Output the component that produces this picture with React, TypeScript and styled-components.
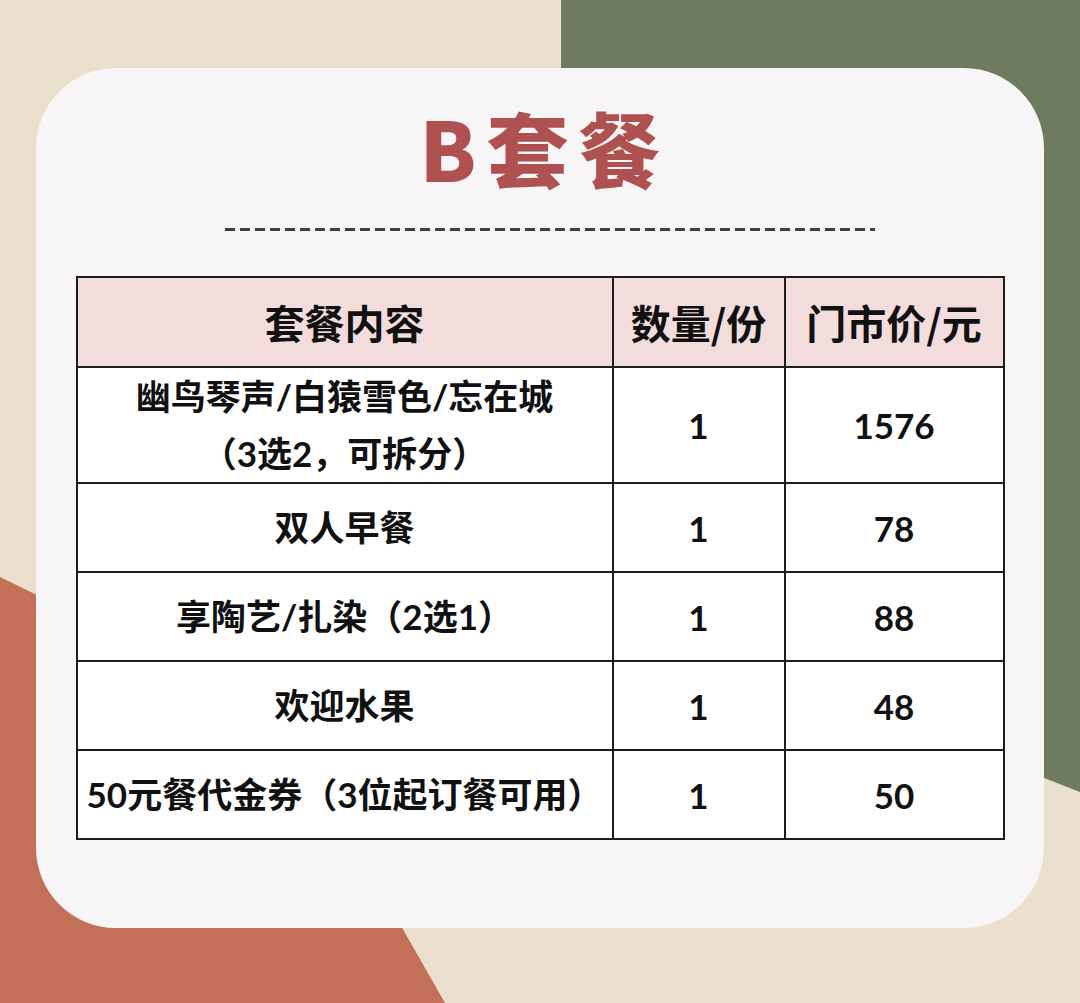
import * as React from 'react';
import styled, { createGlobalStyle } from 'styled-components';

const rows = [
  { name: ['幽鸟琴声/白猿雪色/忘在城', '（3选2，可拆分）'], qty: '1', price: '1576', tall: true },
  { name: ['双人早餐'], qty: '1', price: '78' },
  { name: ['享陶艺/扎染（2选1）'], qty: '1', price: '88' },
  { name: ['欢迎水果'], qty: '1', price: '48' },
  { name: ['50元餐代金券（3位起订餐可用）'], qty: '1', price: '50' },
];

export default function App() {
  return (
    <Page>
      <GlobalStyle />
      <GreenBlob />
      <ClayBlob />
      <Card>
        <Title>B套餐</Title>
        <Dashes />
        <Table>
          <colgroup>
            <col style={{ width: 536 }} />
            <col style={{ width: 172 }} />
            <col style={{ width: 219 }} />
          </colgroup>
          <thead>
            <tr>
              <HeadCell>套餐内容</HeadCell>
              <HeadCell>数量/份</HeadCell>
              <HeadCell>门市价/元</HeadCell>
            </tr>
          </thead>
          <tbody>
            {rows.map(row => (
              <BodyRow key={row.price} $tall={row.tall}>
                <Cell>
                  {row.name.map(line => (
                    <Line key={line}>{line}</Line>
                  ))}
                </Cell>
                <Cell>{row.qty}</Cell>
                <Cell>{row.price}</Cell>
              </BodyRow>
            ))}
          </tbody>
        </Table>
      </Card>
    </Page>
  );
}

const GlobalStyle = createGlobalStyle`
  html, body {
    margin: 0;
    padding: 0;
  }
  body {
    font-family: Lato, "Noto Sans CJK SC", sans-serif;
  }
`;

const Page = styled.div`
  position: relative;
  width: 1080px;
  height: 1003px;
  overflow: hidden;
  background-color: #ebdfcd;
  display: flex;
  align-items: flex-start;
  padding: 68px 36px 0 36px;
  box-sizing: border-box;
`;

const GreenBlob = styled.div`
  position: absolute;
  inset: 0;
  background-color: #6f7b5f;
  clip-path: polygon(561px 0, 1080px 0, 1080px 792px, 561px 590px);
`;

const ClayBlob = styled.div`
  position: absolute;
  inset: 0;
  background-color: #c46f58;
  clip-path: polygon(0 577px, 280px 714px, 445px 1003px, 0 1003px);
`;

const Card = styled.div`
  position: relative;
  z-index: 1;
  width: 1008px;
  height: 860px;
  box-sizing: border-box;
  background-color: #f7f5f6;
  border-radius: 80px;
  padding: 34px 40px 0 40px;
  display: flex;
  flex-direction: column;
  align-items: center;
`;

const Title = styled.h1`
  margin: 0 0 0 10px;
  font-family: "Noto Sans CJK SC", sans-serif;
  font-weight: 900;
  font-size: 82px;
  line-height: 90px;
  color: #b05151;
  letter-spacing: 10px;
`;

const Dashes = styled.div`
  margin: 36px 0 0 20px;
  width: 650px;
  height: 3px;
  background-image: repeating-linear-gradient(
    90deg,
    #3f3f3f 0,
    #3f3f3f 10px,
    transparent 10px,
    transparent 15px
  );
`;

const Table = styled.table`
  margin-top: 45px;
  width: 927px;
  border-collapse: collapse;
  table-layout: fixed;
  border: 2px solid #1c1c1c;
  color: #111;
`;

const HeadCell = styled.th`
  height: 88px;
  background-color: #f2dcdc;
  border: 2px solid #1c1c1c;
  font-family: "Noto Sans CJK SC", sans-serif;
  font-size: 40px;
  font-weight: 700;
  text-align: center;
  padding: 0;
`;

const BodyRow = styled.tr<{ $tall?: boolean }>`
  height: ${p => (p.$tall ? '115px' : '89px')};
`;

const Cell = styled.td`
  background-color: #fff;
  border: 2px solid #1c1c1c;
  font-size: 35px;
  font-weight: 700;
  text-align: center;
  padding: 0 2px;
  white-space: nowrap;
`;

const Line = styled.div`
  line-height: 57px;
`;
